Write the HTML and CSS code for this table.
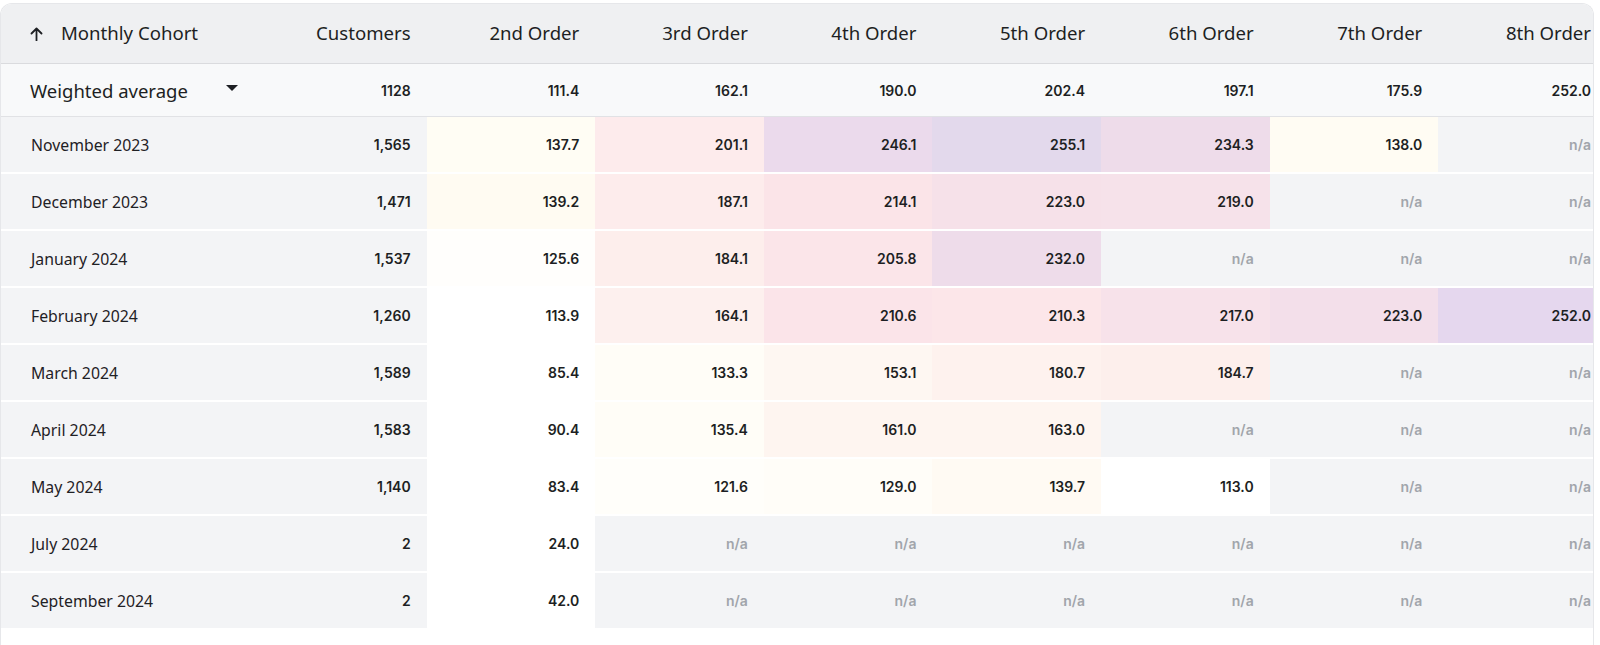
FILE: index.html
```html
<!DOCTYPE html>
<html lang="en">
<head>
<meta charset="utf-8">
<title>Cohort table</title>
<link rel="stylesheet" href="styles.css">
</head>
<body>
<div class="frame">
  <table class="cohort">
    <colgroup>
      <col class="c-first">
      <col class="c-num"><col class="c-num"><col class="c-num"><col class="c-num"><col class="c-num"><col class="c-num"><col class="c-num"><col class="c-num">
    </colgroup>
    <thead>
      <tr class="head">
        <th class="lbl"><span class="sort"><svg width="13" height="14" viewBox="0 0 13 14"><path d="M6.5 13.5V1.5M1.5 6.5L6.5 1.5L11.5 6.5" fill="none" stroke="#1d1f23" stroke-width="1.8" stroke-linecap="round" stroke-linejoin="round"/></svg></span>Monthly Cohort</th>
        <th>Customers</th>
        <th>2nd Order</th>
        <th>3rd Order</th>
        <th>4th Order</th>
        <th>5th Order</th>
        <th>6th Order</th>
        <th>7th Order</th>
        <th>8th Order</th>
      </tr>
      <tr class="avg">
        <th class="lbl"><span class="avg-sel">Weighted average<span class="caret"></span></span></th>
        <td>1128</td>
        <td>111.4</td>
        <td>162.1</td>
        <td>190.0</td>
        <td>202.4</td>
        <td>197.1</td>
        <td>175.9</td>
        <td>252.0</td>
      </tr>
    </thead>
    <tbody>
      <tr>
        <th class="lbl">November 2023</th><td class="base">1,565</td>
        <td style="background:#fffdf4">137.7</td>
        <td style="background:#fdebec">201.1</td>
        <td style="background:#ebdaec">246.1</td>
        <td style="background:#e3d9ec">255.1</td>
        <td style="background:#eedcea">234.3</td>
        <td style="background:#fffcf3">138.0</td>
        <td class="na">n/a</td>
      </tr>
      <tr>
        <th class="lbl">December 2023</th><td class="base">1,471</td>
        <td style="background:#fffbf2">139.2</td>
        <td style="background:#fdecec">187.1</td>
        <td style="background:#fbe4e8">214.1</td>
        <td style="background:#f6e1e9">223.0</td>
        <td style="background:#f6e2ea">219.0</td>
        <td class="na">n/a</td>
        <td class="na">n/a</td>
      </tr>
      <tr>
        <th class="lbl">January 2024</th><td class="base">1,537</td>
        <td style="background:#fffefc">125.6</td>
        <td style="background:#fdeeec">184.1</td>
        <td style="background:#fbe5e9">205.8</td>
        <td style="background:#eedcea">232.0</td>
        <td class="na">n/a</td>
        <td class="na">n/a</td>
        <td class="na">n/a</td>
      </tr>
      <tr>
        <th class="lbl">February 2024</th><td class="base">1,260</td>
        <td style="background:#ffffff">113.9</td>
        <td style="background:#fdf0ee">164.1</td>
        <td style="background:#fbe4e9">210.6</td>
        <td style="background:#fce6e9">210.3</td>
        <td style="background:#f7e2ea">217.0</td>
        <td style="background:#f3dfea">223.0</td>
        <td style="background:#e5d7ee">252.0</td>
      </tr>
      <tr>
        <th class="lbl">March 2024</th><td class="base">1,589</td>
        <td style="background:#ffffff">85.4</td>
        <td style="background:#fffdf7">133.3</td>
        <td style="background:#fef7f2">153.1</td>
        <td style="background:#fef2ee">180.7</td>
        <td style="background:#fdefec">184.7</td>
        <td class="na">n/a</td>
        <td class="na">n/a</td>
      </tr>
      <tr>
        <th class="lbl">April 2024</th><td class="base">1,583</td>
        <td style="background:#ffffff">90.4</td>
        <td style="background:#fffdf7">135.4</td>
        <td style="background:#fef5f0">161.0</td>
        <td style="background:#fef5f0">163.0</td>
        <td class="na">n/a</td>
        <td class="na">n/a</td>
        <td class="na">n/a</td>
      </tr>
      <tr>
        <th class="lbl">May 2024</th><td class="base">1,140</td>
        <td style="background:#ffffff">83.4</td>
        <td style="background:#fffefa">121.6</td>
        <td style="background:#fffdf8">129.0</td>
        <td style="background:#fffaf3">139.7</td>
        <td style="background:#ffffff">113.0</td>
        <td class="na">n/a</td>
        <td class="na">n/a</td>
      </tr>
      <tr>
        <th class="lbl">July 2024</th><td class="base">2</td>
        <td style="background:#ffffff">24.0</td>
        <td class="na">n/a</td>
        <td class="na">n/a</td>
        <td class="na">n/a</td>
        <td class="na">n/a</td>
        <td class="na">n/a</td>
        <td class="na">n/a</td>
      </tr>
      <tr>
        <th class="lbl">September 2024</th><td class="base">2</td>
        <td style="background:#ffffff">42.0</td>
        <td class="na">n/a</td>
        <td class="na">n/a</td>
        <td class="na">n/a</td>
        <td class="na">n/a</td>
        <td class="na">n/a</td>
        <td class="na">n/a</td>
      </tr>
    </tbody>
  </table>
</div>
</body>
</html>
```

FILE: styles.css
```css
html, body {
  margin: 0;
  padding: 0;
  background: #ffffff;
}

body {
  padding-top: 3px;
  font-family: "Noto Sans", "Open Sans", sans-serif;
  color: #1d1f23;
}

.frame {
  width: 1594px;
  height: 642px;
  box-sizing: border-box;
  border: 1px solid #e6e7ea;
  border-bottom: none;
  border-radius: 12px 12px 0 0;
  overflow: hidden;
  background: #ffffff;
}

.cohort {
  width: 1606px;
  table-layout: fixed;
  border-collapse: separate;
  border-spacing: 0;
}

.c-first { width: 257px; }
.c-num { width: 168.6px; }

.cohort th,
.cohort td {
  padding: 0 16px 0 0;
  text-align: right;
  white-space: nowrap;
  box-sizing: border-box;
}

/* header row */
.head th {
  height: 60px;
  padding-bottom: 3px;
  background: #eff0f2;
  border-bottom: 1px solid #dadbde;
  font-size: 18.6px;
  font-weight: 400;
  color: #1d1f23;
}

.head th.lbl {
  text-align: left;
  padding-left: 29px;
}

.sort {
  display: inline-block;
  vertical-align: -1px;
  margin-right: 18px;
}

.sort svg { display: block; }

/* weighted average row */
.avg th,
.avg td {
  height: 53px;
  background: #f8f9fa;
  border-bottom: 1px solid #e1e2e5;
}

.avg th.lbl {
  text-align: left;
  padding-left: 29px;
  padding-right: 20px;
  font-size: 18.5px;
  font-weight: 400;
}

.avg-sel {
  display: flex;
  align-items: center;
  justify-content: space-between;
}

.caret {
  width: 0;
  height: 0;
  border-left: 6px solid transparent;
  border-right: 6px solid transparent;
  border-top: 6px solid #1d1f23;
  margin-bottom: 5px;
}

.avg td {
  font-family: "Inter", "Roboto", sans-serif;
  font-weight: 600;
  font-size: 14px;
  color: #1d1f23;
}

/* data rows */
tbody th,
tbody td {
  height: 57px;
  border-bottom: 2px solid #ffffff;
}

tbody th.lbl {
  text-align: left;
  padding-left: 30px;
  background: #f3f4f6;
  font-size: 15.8px;
  font-weight: 400;
  color: #1f2125;
}

tbody td {
  font-family: "Inter", "Roboto", sans-serif;
  font-weight: 600;
  font-size: 14px;
  color: #1d1f23;
  background: #ffffff;
}

tbody td.base {
  background: #f3f4f6;
}

tbody td.na {
  background: #f3f4f6;
  color: #a1a5ab;
}
```
